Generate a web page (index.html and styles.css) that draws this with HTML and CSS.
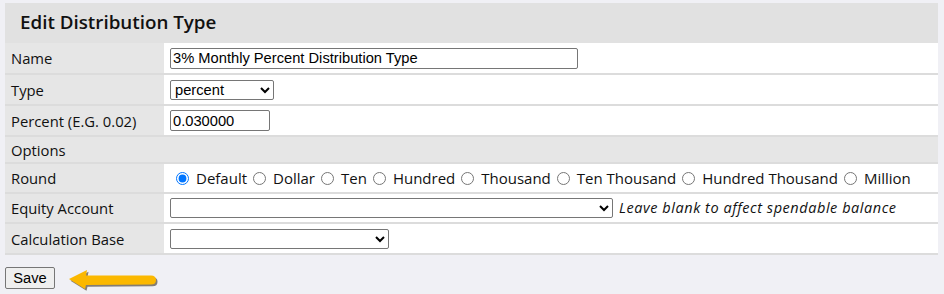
FILE: index.html
```html
<!DOCTYPE html>
<html>
<head>
<meta charset="utf-8">
<link rel="stylesheet" href="styles.css">
</head>
<body>
<div class="panel">
  <h2 class="title">Edit Distribution Type</h2>
  <div class="form">
    <div class="row h32">
      <div class="label">Name</div>
      <div class="value"><input class="text name" type="text" value="3% Monthly Percent Distribution Type"></div>
    </div>
    <div class="row h31">
      <div class="label">Type</div>
      <div class="value"><select class="sel type"><option>percent</option></select></div>
    </div>
    <div class="row h31">
      <div class="label">Percent (E.G. 0.02)</div>
      <div class="value"><input class="text pct" type="text" value="0.030000"></div>
    </div>
    <div class="row section h27">
      <div class="label">Options</div>
    </div>
    <div class="row h30">
      <div class="label">Round</div>
      <div class="value radios"><label class="opt"><input type="radio" name="round" checked>Default</label><label class="opt"><input type="radio" name="round">Dollar</label><label class="opt"><input type="radio" name="round">Ten</label><label class="opt"><input type="radio" name="round">Hundred</label><label class="opt"><input type="radio" name="round">Thousand</label><label class="opt"><input type="radio" name="round">Ten Thousand</label><label class="opt"><input type="radio" name="round">Hundred Thousand</label><label class="opt"><input type="radio" name="round">Million</label></div>
    </div>
    <div class="row h30">
      <div class="label">Equity Account</div>
      <div class="value"><select class="sel equity"><option></option></select><em class="hint">Leave blank to affect spendable balance</em></div>
    </div>
    <div class="row h31">
      <div class="label">Calculation Base</div>
      <div class="value"><select class="sel calc"><option></option></select></div>
    </div>
  </div>
</div>
<div class="actions">
  <button class="save">Save</button>
  <svg class="arrow" width="92" height="26" viewBox="0 0 92 26">
    <path d="M1 11 L19 2 L18 7.5 L83 7.5 Q88 7.5 88 12 Q88 16.5 83 16.5 L18 17 L17 21 Z" fill="#3a3020" opacity="0.6" transform="translate(1.5,1.8)"/>
    <path d="M1 11 L19 2 L18 7.5 L83 7.5 Q88 7.5 88 12 Q88 16.5 83 16.5 L18 17 L17 21 Z" fill="#fbb800"/>
  </svg>
</div>
</body>
</html>
```

FILE: styles.css
```css
html, body {
  margin: 0;
  padding: 0;
  background: #f0f0f5;
}
body {
  padding: 3px 6px 0 5px;
  font-family: "Open Sans", "Noto Sans", sans-serif;
  color: #111;
}
.panel {
  width: 933px;
}
.title {
  margin: 0;
  height: 40px;
  line-height: 38px;
  padding-left: 15px;
  background: #e1e1e1;
  font-size: 18.8px;
  font-weight: 600;
  color: #111;
}
.form {
  display: flex;
  flex-direction: column;
}
.row {
  display: grid;
  grid-template-columns: 159px 1fr;
  box-sizing: border-box;
  border-bottom: 2px solid #dcdcdc;
  font-size: 14.8px;
  line-height: 18px;
}
.h32 { height: 32px; }
.h31 { height: 31px; }
.h30 { height: 30px; }
.h27 { height: 27px; }
.label {
  background: #e6e6e6;
  padding-left: 6px;
  display: flex;
  align-items: center;
}
.section {
  background: #e6e6e6;
  grid-template-columns: 1fr;
}
.value {
  background: #fff;
  padding-left: 6px;
  display: flex;
  align-items: center;
}
.text {
  font-family: "Liberation Sans", Arial, sans-serif;
  font-size: 14.7px;
  height: 21px;
  box-sizing: border-box;
  border: 1px solid #767676;
  border-radius: 2px;
  padding: 1px 2px;
  margin: 0;
  color: #000;
}
.name { width: 408px; }
.pct { width: 100px; }
.sel {
  font-family: "Liberation Sans", Arial, sans-serif;
  font-size: 14.7px;
  height: 20px;
  box-sizing: border-box;
  border: 1px solid #767676;
  border-radius: 2px;
  margin: 0;
  background: #fff;
  color: #000;
}
.type { width: 104px; }
.equity { width: 443px; }
.calc { width: 219px; }
.hint {
  font-size: 14.5px;
  letter-spacing: 0.55px;
  color: #111;
  margin-left: 6px;
}
.radios {
  white-space: nowrap;
  font-size: 15px;
}
.opt {
  display: flex;
  align-items: center;
}
.opt input {
  margin: 0 7px 0 6px;
  width: 13px;
  height: 13px;
}
.actions {
  display: flex;
  align-items: flex-start;
  margin-top: 12px;
  gap: 13px;
}
.save {
  font-family: "Liberation Sans", Arial, sans-serif;
  font-size: 14.7px;
  height: 22px;
  width: 50px;
  padding: 0;
  border: 1px solid #767676;
  border-radius: 2px;
  background: #efefef;
  color: #000;
}
.arrow {
  display: block;
  margin-top: 1px;
}
```
